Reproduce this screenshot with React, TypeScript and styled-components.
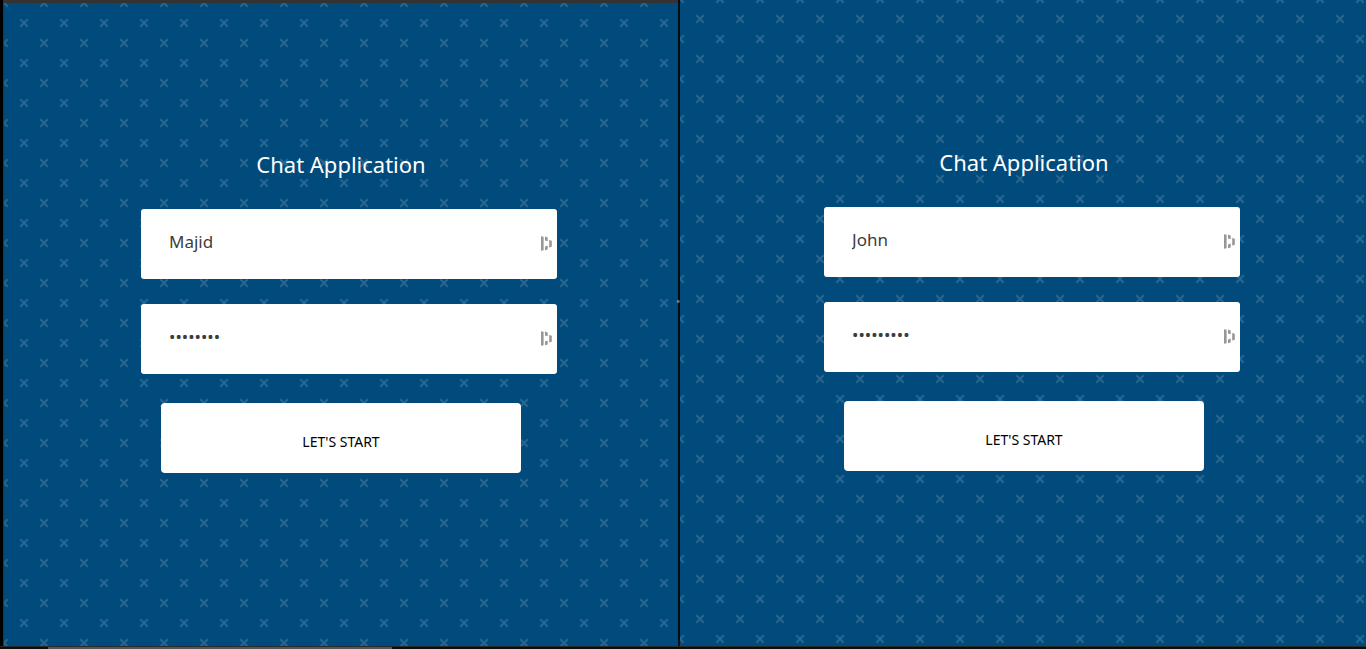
import React, { useId } from "react";
import styled, { createGlobalStyle } from "styled-components";

const crossTile = `url("data:image/svg+xml,${encodeURIComponent(
  "<svg xmlns='http://www.w3.org/2000/svg' width='40' height='40'><path fill='none' stroke='#266690' stroke-width='2' d='M17 17l6 6M23 17l-6 6M-3 -3l6 6M3 -3l-6 6M37 -3l6 6M43 -3l-6 6M-3 37l6 6M3 37l-6 6M37 37l6 6M43 37l-6 6' stroke-linecap='square'/></svg>"
)}")`;

const GlobalStyle = createGlobalStyle`
  * { box-sizing: border-box; }
  body {
    margin: 0;
    background: #0c0c0c;
    font-family: "Noto Sans", "Open Sans", sans-serif;
  }
`;

const Desktop = styled.div`
  display: grid;
  grid-template-rows: 1fr 3px;
  min-height: 100vh;
`;

const Windows = styled.main`
  display: grid;
  grid-template-columns: 680fr 686fr;
`;

const Pane = styled.section<{ $framed?: boolean }>`
  position: relative;
  display: flex;
  flex-direction: column;
  align-items: center;
  padding: ${(p) => (p.$framed ? "146px 0 20px" : "147px 0 20px 2px")};
  background: #004b7c ${crossTile} ${(p) => (p.$framed ? "0 0" : "0 -1px")};
`;

const Frame = styled.div`
  position: relative;
  display: grid;
  border-left: 3px solid #000;
  border-right: 2px solid #0c0c0c;
  background: #333;
  padding: 3px 0 0 1px;
`;

const EdgeMark = styled.span`
  position: absolute;
  z-index: 1;
  right: -2px;
  top: 46%;
  color: #aaa;
  font-size: 6px;
  line-height: 8px;
`;

const Title = styled.h1`
  margin: 0;
  color: #fff;
  font-size: 22px;
  font-weight: 400;
  line-height: 30px;
`;

const Form = styled.form`
  display: flex;
  flex-direction: column;
  width: 400px;
  margin-top: 30px;
`;

const Field = styled.div`
  position: relative;
  width: 416px;
  margin-bottom: 25px;
`;

const TextInput = styled.input`
  display: block;
  width: 100%;
  height: 70px;
  padding: 0 28px 6px;
  border: 0;
  border-radius: 3px;
  background: #fff;
  color: #3c3c3c;
  font-family: inherit;
  font-size: 17px;
  outline: none;
`;

const ManagerIcon = styled.svg`
  position: absolute;
  right: 5px;
  top: 27px;
  fill: #999693;
`;

const StartButton = styled.button`
  align-self: center;
  width: 360px;
  height: 70px;
  margin-top: 4px;
  padding: 7px 0 0;
  border: 0;
  border-radius: 4px;
  background: #fff;
  color: #000;
  font-family: inherit;
  font-size: 14px;
  text-transform: uppercase;
`;

const Taskbar = styled.footer`
  display: flex;
  padding-left: 48px;
  border-top: 1px solid #2b2b2b;
  background: #0c0c0c;
`;

const TaskThumb = styled.div`
  width: 344px;
  background: #555;
`;

function FieldIcon() {
  return (
    <ManagerIcon width="11" height="15" viewBox="0 0 11 15" aria-hidden="true">
      <path d="M0 .3 2.600 .8v13.400L0 14.700zM4 .6l2.700 .8v3.800L4 4.400zM4 10.400l2.700-.8v3.800L4 14.300zM8.200 4l2.600 .8v5.900l-2.600 .8z" />
    </ManagerIcon>
  );
}

function ChatLogin({ name, password, framed }: { name: string; password: string; framed?: boolean }) {
  const id = useId();
  return (
    <Pane $framed={framed}>
      <Title>Chat Application</Title>
      <Form onSubmit={(e) => e.preventDefault()}>
        <Field>
          <TextInput id={`${id}-name`} aria-label="Username" defaultValue={name} />
          <FieldIcon />
        </Field>
        <Field>
          <TextInput id={`${id}-pass`} type="password" aria-label="Password" defaultValue={password} />
          <FieldIcon />
        </Field>
        <StartButton type="submit">Let's Start</StartButton>
      </Form>
    </Pane>
  );
}

export default function App() {
  return (
    <>
      <GlobalStyle />
      <Desktop>
        <Windows>
          <Frame>
            <ChatLogin name="Majid" password="majid123" framed />
            <EdgeMark aria-hidden="true">e</EdgeMark>
          </Frame>
          <ChatLogin name="John" password="john12345" />
        </Windows>
        <Taskbar>
          <TaskThumb />
        </Taskbar>
      </Desktop>
    </>
  );
}
